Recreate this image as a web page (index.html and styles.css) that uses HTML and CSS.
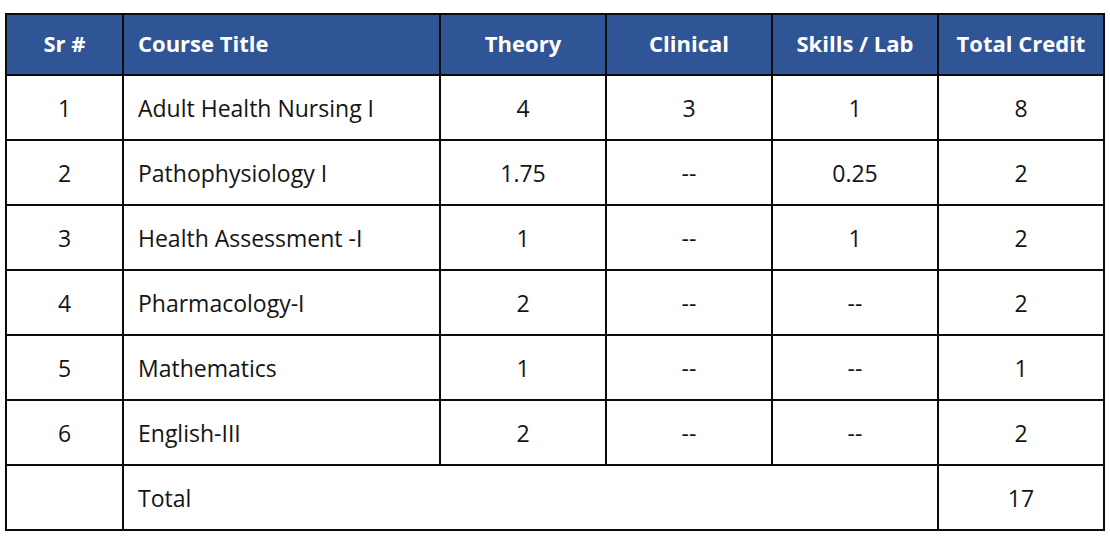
FILE: index.html
```html
<!DOCTYPE html>
<html lang="en">
<head>
<meta charset="utf-8">
<title>Course Credits</title>
<link rel="stylesheet" href="styles.css">
</head>
<body>
<table class="credits">
  <colgroup>
    <col class="c-sr">
    <col class="c-title">
    <col class="c-num">
    <col class="c-num">
    <col class="c-num">
    <col class="c-num">
  </colgroup>
  <thead>
    <tr>
      <th class="center">Sr #</th>
      <th class="left">Course Title</th>
      <th class="center">Theory</th>
      <th class="center">Clinical</th>
      <th class="center">Skills / Lab</th>
      <th class="center">Total Credit</th>
    </tr>
  </thead>
  <tbody>
    <tr><td class="center">1</td><td class="left">Adult Health Nursing I</td><td class="center">4</td><td class="center">3</td><td class="center">1</td><td class="center">8</td></tr>
    <tr><td class="center">2</td><td class="left">Pathophysiology I</td><td class="center">1.75</td><td class="center">--</td><td class="center">0.25</td><td class="center">2</td></tr>
    <tr><td class="center">3</td><td class="left">Health Assessment -I</td><td class="center">1</td><td class="center">--</td><td class="center">1</td><td class="center">2</td></tr>
    <tr><td class="center">4</td><td class="left">Pharmacology-I</td><td class="center">2</td><td class="center">--</td><td class="center">--</td><td class="center">2</td></tr>
    <tr><td class="center">5</td><td class="left">Mathematics</td><td class="center">1</td><td class="center">--</td><td class="center">--</td><td class="center">1</td></tr>
    <tr><td class="center">6</td><td class="left">English-III</td><td class="center">2</td><td class="center">--</td><td class="center">--</td><td class="center">2</td></tr>
    <tr><td class="center"></td><td class="left" colspan="4">Total</td><td class="center">17</td></tr>
  </tbody>
</table>
</body>
</html>
```
FILE: styles.css
```css
html, body {
  margin: 0;
  padding: 0;
  background: #ffffff;
}

body {
  padding: 13px 0 0 5px;
  font-family: "Open Sans", "Noto Sans", sans-serif;
  color: #141414;
}

.credits {
  width: 1100px;
  table-layout: fixed;
  border-collapse: separate;
  border-spacing: 0;
  border-top: 2px solid #0c0c0c;
  border-left: 2px solid #0c0c0c;
}

.c-sr { width: 117px; }
.c-title { width: 317px; }
.c-num { width: 166px; }

.credits th,
.credits td {
  box-sizing: border-box;
  border-right: 2px solid #0c0c0c;
  border-bottom: 2px solid #0c0c0c;
  padding: 0 14px;
  vertical-align: middle;
  white-space: nowrap;
}

.credits th {
  height: 61px;
  padding-bottom: 3px;
  background: #2f5597;
  color: #ffffff;
  font-size: 22px;
  font-weight: 700;
}

.credits td {
  height: 65px;
  font-size: 23px;
  font-weight: 400;
}

.center { text-align: center; }
.left { text-align: left; }
```
